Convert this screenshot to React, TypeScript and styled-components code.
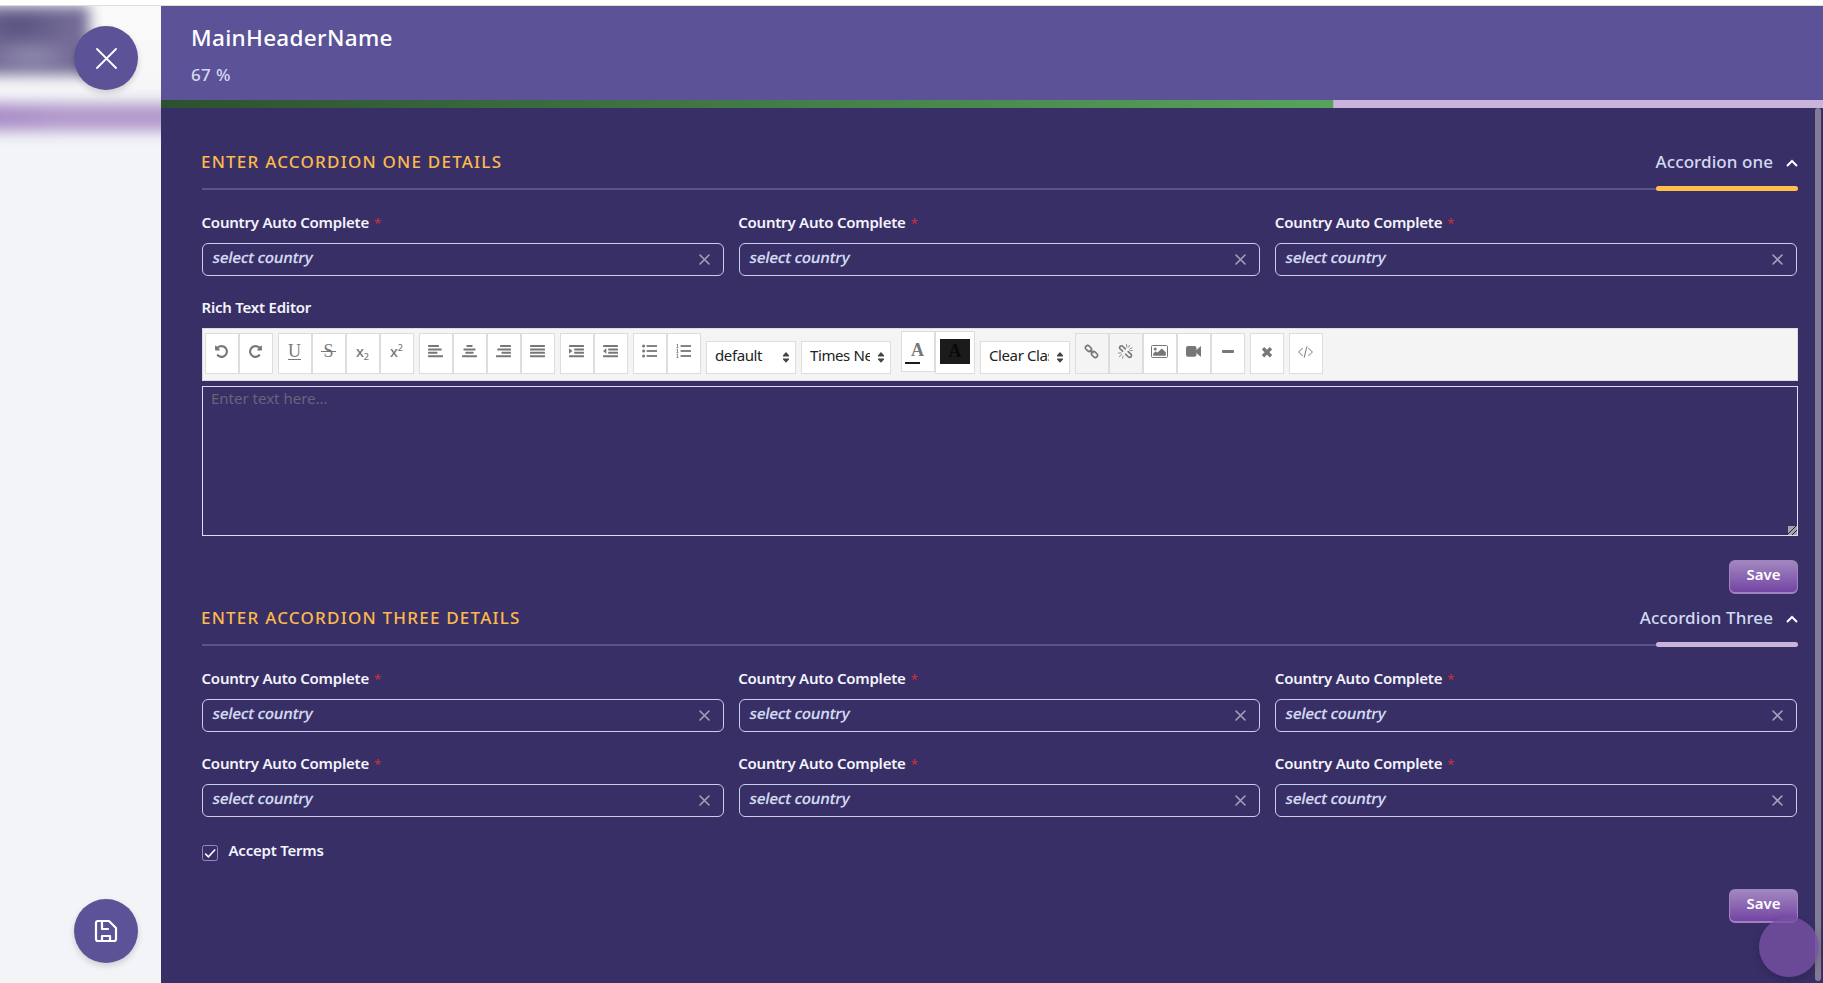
import React from 'react';
import styled, { createGlobalStyle } from 'styled-components';

const Global = createGlobalStyle`
  * { box-sizing: border-box; }
  html, body { margin: 0; padding: 0; overflow: hidden; }
  body { font-family: "Noto Sans", sans-serif; background: #fff; }
`;

const Page = styled.div`
  display: flex;
  width: 1823px;
  height: 983px;
  padding-top: 5px;
  background: #fff;
  overflow: hidden;
`;
const Backdrop = styled.div`
  position: relative;
  display: flex;
  flex-direction: column;
  justify-content: space-between;
  align-items: flex-end;
  width: 161px;
  padding: 20px 23px;
  border-top: 1px solid #dcdedc;
  background: linear-gradient(#fafafa 0, #f8f8f9 60px, #f2f4f8 110px);
  overflow: hidden;
`;
const BlurDark = styled.div`
  position: absolute;
  left: -20px;
  top: 0;
  width: 109px;
  height: 69px;
  background:
    radial-gradient(ellipse 45px 16px at 52px 50px, #9590b1, transparent),
    radial-gradient(ellipse 55px 22px at 38px 20px, #565080, transparent),
    #746b96;
  filter: blur(7px);
`;
const BlurBand = styled.div`
  position: absolute;
  left: -20px;
  top: 97px;
  width: 210px;
  height: 28px;
  background: linear-gradient(90deg, #a88cc6, #b29bcb 40%, #b29bcb);
  filter: blur(7px);
`;
const Round = styled.button`
  position: relative;
  display: flex;
  align-items: center;
  justify-content: center;
  width: 64px;
  height: 64px;
  padding: 0;
  border: 0;
  border-radius: 50%;
  background: #5b5298;
  color: #fff;
  box-shadow: 0 3px 6px rgba(0, 0, 0, 0.16);
`;
const Panel = styled.main`
  position: relative;
  flex: 1;
  display: flex;
  flex-direction: column;
  border-top: 1px solid #dcdedc;
  background: #382f67;
`;
const Header = styled.header`
  height: 94px;
  padding: 16px 30px 0;
  background: #5b5298;
`;
const Title = styled.h1`
  margin: 0;
  font-size: 22.5px;
  line-height: 32px;
  font-weight: 500;
  letter-spacing: 0.32px;
  color: #fff;
`;
const Percent = styled.div`
  margin-top: 9px;
  font-size: 17px;
  line-height: 24px;
  font-weight: 500;
  letter-spacing: 0.4px;
  color: #d3daf0;
`;
const Track = styled.div`
  height: 8px;
  background: #c9b5dc;
`;
const Fill = styled.div`
  height: 100%;
  border-right: 1px solid #b3aebf;
  background: linear-gradient(90deg, #2c5130, #58a35c);
`;
const Body = styled.div`
  flex: 1;
  padding: 41px 25px 0 41px;
`;
const Scrollbar = styled.div`
  position: absolute;
  right: 2px;
  top: 102px;
  width: 6px;
  height: 873px;
  border-radius: 3px;
  background: #837c94;
`;
const SectionHead = styled.div<{ $accent: string }>`
  position: relative;
  display: flex;
  justify-content: space-between;
  height: 41px;
  border-bottom: 2px solid #5e5389;
  &::after {
    content: '';
    position: absolute;
    right: 0;
    bottom: -3px;
    width: 142px;
    height: 5px;
    border-radius: 2.5px;
    background: ${(p) => p.$accent};
  }
`;
const SectionTitle = styled.h2`
  margin: 0 0 0 -1px;
  font-size: 17px;
  line-height: 25px;
  font-weight: 500;
  letter-spacing: 1.22px;
  color: #fdb94b;
`;
const Toggle = styled.div`
  display: flex;
  font-size: 17px;
  line-height: 25px;
  font-weight: 500;
  letter-spacing: 0.07px;
  color: #d3daf0;
  svg { margin: 9.5px 0 0 13px; }
`;
const Grid = styled.div`
  display: grid;
  grid-template-columns: repeat(3, 1fr);
  gap: 21px 15px;
  margin: 22px 1px 21px 0;
`;
const Label = styled.label`
  display: block;
  height: 31px;
  margin-left: -0.5px;
  font-size: 15px;
  line-height: 20px;
  font-weight: 600;
  letter-spacing: -0.22px;
  color: #f4f4fb;
`;
const Star = styled.span`
  margin-left: 5px;
  font-size: 13px;
  font-weight: 500;
  color: #c5303a;
`;
const Field = styled.div`
  display: flex;
  justify-content: space-between;
  height: 33px;
  padding: 3px 12px 0 10px;
  border: 1px solid #c6cfec;
  border-radius: 6px;
  svg { margin: 7px 1px 0 0; }
`;
const Placeholder = styled.span`
  height: 20px;
  font-size: 15px;
  line-height: 20px;
  font-weight: 600;
  letter-spacing: -0.25px;
  transform: skewX(-11deg);
  color: #d0d7ee;
`;
const Toolbar = styled.div`
  display: flex;
  align-items: flex-start;
  gap: 5px;
  height: 53px;
  margin-bottom: 5px;
  padding: 4px 2px;
  border: 1px solid #ddd;
  background: #f4f4f4;
`;
const Group = styled.div`
  display: flex;
`;
const Tool = styled.button<{ $off?: boolean; $wide?: boolean }>`
  display: flex;
  align-items: flex-start;
  justify-content: center;
  width: ${(p) => (p.$wide ? 40 : 34)}px;
  height: 41px;
  padding: 10px 1px 0 0;
  border: 1px solid #ddd;
  background: ${(p) => (p.$off ? '#f4f4f4' : '#fff')};
  color: #777;
  font-family: "Noto Sans", sans-serif;
`;
const Glyph = styled.span<{ $line?: string }>`
  font: 18px/15px "Liberation Serif", serif;
  text-decoration: ${(p) => p.$line || 'none'};
  text-decoration-thickness: 1px;
  text-underline-offset: 2px;
`;
const Ink = styled(Glyph)`
  margin-top: 1px;
  font-weight: 700;
`;
const Strike = styled.span`
  display: flex;
  justify-content: center;
  width: 15px;
  background: linear-gradient(currentColor, currentColor) 0 7px / 100% 1px no-repeat;
`;
const Script = styled.span`
  font: 500 14.5px/15px "Noto Sans", sans-serif;
  sub, sup { font-size: 9px; line-height: 0; }
  sup { vertical-align: 6px; }
  sub { vertical-align: -3px; }
`;
const Colors = styled.div`
  display: flex;
  margin: -2px 0 0 5px;
`;
const InkTool = styled(Tool)`
  position: relative;
  padding-top: 10px;
  &::after {
    content: '';
    position: absolute;
    left: 3px;
    top: 30px;
    width: 15px;
    height: 2px;
    background: #1b1b1b;
  }
`;
const FillTool = styled(Tool)`
  height: 43px;
  padding: 7px 0 0;
`;
const Swatch = styled.span`
  display: flex;
  justify-content: center;
  width: 30px;
  height: 25px;
  padding-top: 4px;
  background: #1b1b1b;
  color: #080808;
`;
const Select = styled.div`
  display: flex;
  justify-content: space-between;
  align-items: flex-start;
  width: 90px;
  height: 33px;
  margin-top: 8px;
  padding: 3px 6px 0 8px;
  border: 1px solid #ddd;
  background: #fff;
  font-size: 15px;
  line-height: 20px;
  letter-spacing: -0.4px;
  color: #222;
  svg { margin-top: 7px; }
`;
const SelectText = styled.span`
  width: 60px;
  overflow: hidden;
  white-space: nowrap;
`;
const Editor = styled.div`
  position: relative;
  height: 150px;
  padding: 0 8px;
  border: 1px solid #dde;
  font-size: 15px;
  line-height: 22px;
  color: #666677;
  svg { position: absolute; right: 0; bottom: 0; }
`;
const Actions = styled.div<{ $top: number }>`
  display: flex;
  justify-content: flex-end;
  margin: ${(p) => p.$top}px 0 11px;
`;
const Save = styled.button`
  width: 69px;
  height: 34px;
  padding: 0 0 6px;
  border: 1px solid #a283c2;
  border-bottom-width: 2px;
  border-radius: 6px;
  background: linear-gradient(#a287bf, #7445a4);
  color: #fff;
  font: 600 15px/20px "Noto Sans", sans-serif;
`;
const Terms = styled.div`
  display: flex;
  align-items: flex-start;
  height: 16px;
  margin-top: 28px;
  gap: 11px;
`;
const Box = styled.span`
  display: flex;
  width: 16px;
  height: 16px;
  border: 1px solid #a283c2;
  border-radius: 2.5px;
`;
const TermsText = styled(Label)`
  margin-top: -5px;
`;
const Floating = styled.div`
  position: absolute;
  right: 4px;
  bottom: 6px;
  width: 60px;
  height: 60px;
  border-radius: 50%;
  background: rgba(117, 81, 162, 0.82);
  box-shadow: 0 3px 10px rgba(0, 0, 0, 0.18);
`;

const UNDO =
  'M1664 896q0 156-61 298t-164 245-245 164-298 61q-172 0-327-72.5t-264-204.5q-7-10-6.5-22.5t8.5-20.5l137-138q10-9 25-9 16 2 23 12 73 95 179 147t225 52q104 0 198.5-40.5t163.5-109.5 109.5-163.5 40.5-198.5-40.5-198.5-109.5-163.5-163.5-109.5-198.5-40.5q-98 0-188 35.5t-160 101.5l137 138q31 30 14 69-17 40-59 40h-448q-26 0-45-19t-19-45v-448q0-42 40-59 39-17 69 14l130 129q107-101 244.5-156.5t284.5-55.5q156 0 298 61t245 164 164 245 61 298z';

const Undo = ({ flip }: { flip?: boolean }) => (
  <svg width="15" height="15" viewBox="0 0 1792 1792" fill="currentColor">
    <path d={UNDO} transform={flip ? 'translate(1792 0) scale(-1 1)' : undefined} />
  </svg>
);

/* Each row is [x, width]. */
const Rows = ({ rows, children }: { rows: number[][]; children?: React.ReactNode }) => (
  <svg width="15" height="15" viewBox="0 0 15 15" fill="currentColor">
    {rows.map(([x, w], i) => (
      <rect key={i} x={x} y={1 + i * 3.4} width={w} height="2" rx="0.4" />
    ))}
    {children}
  </svg>
);
const indentRows = [[0, 15], [5.2, 9.8], [5.2, 9.8], [0, 15]];

const Bullets = ({ numbered }: { numbered?: boolean }) => (
  <svg width="15" height="15" viewBox="0 0 15 15" fill="currentColor">
    {[2, 7, 12].map((y) => (
      <g key={y}>
        {numbered ? (
          <path d={`M0.6 ${y - 1.6}L1.5 ${y - 2}V${y + 1.4}M0.4 ${y + 1.6}H2.4`} fill="none" stroke="currentColor" strokeWidth="0.8" />
        ) : (
          <circle cx="1.6" cy={y} r="1.5" />
        )}
        <rect x="4.6" y={y - 0.9} width="10.4" height="1.8" />
      </g>
    ))}
  </svg>
);

const Link = ({ broken }: { broken?: boolean }) => (
  <svg width="15" height="15" viewBox="0 0 15 15" fill="none" stroke="currentColor" strokeWidth="1.6" strokeLinecap="round">
    {broken ? (
      <>
        <path d="M4.6 7.2L2.3 5C1.4 4.1 1.4 3.2 2.2 2.4C3 1.6 4 1.6 4.9 2.5L7.2 4.9M10.2 7.6L12.9 10.2C13.8 11.1 13.7 12.1 12.9 12.9C12.1 13.7 11.1 13.7 10.2 12.8L7.7 10.2" />
        <path strokeWidth="0.8" d="M8.6 0.5V3M11.7 1.3L10.1 3.4M13.9 3.8L11.7 4.9M14.3 6.5H11.9M0.5 9H3M1.3 12.6L3.6 10.7M4.6 14.3L5.2 12" />
      </>
    ) : (
      <>
        <rect x="1.1" y="2.3" width="6.8" height="4.4" rx="2.2" transform="rotate(45 4.5 4.5)" />
        <rect x="7.1" y="8.3" width="6.8" height="4.4" rx="2.2" transform="rotate(45 10.5 10.5)" />
        <path d="M6.2 6.2L8.8 8.8" />
      </>
    )}
  </svg>
);
const Image = () => (
  <svg width="17" height="15" viewBox="0 0 17 15" fill="currentColor">
    <rect x="0.5" y="1.5" width="16" height="12" rx="1" fill="none" stroke="currentColor" />
    <circle cx="4.2" cy="4.9" r="1.5" />
    <path d="M2.2 11.7V9.6L4.8 7.2L6.5 8.6L10.8 4.5L14.8 8.2V11.7Z" />
  </svg>
);
const Video = () => (
  <svg width="15" height="15" viewBox="0 0 15 15" fill="currentColor">
    <rect x="0" y="2" width="10.5" height="10.8" rx="2" />
    <path d="M10 6.4L14.2 2.4Q15 2 15 3V12Q15 12.9 14.2 12.4L10 8.4Z" />
  </svg>
);
const Code = () => (
  <svg width="17" height="15" viewBox="0 0 17 15" fill="none" stroke="currentColor" strokeWidth="1">
    <path d="M5.6 4L1.6 8L5.6 12M11.4 4L15.4 8L11.4 12M9.9 2.5L7.2 13.5" />
  </svg>
);
const Arrows = () => (
  <svg width="6" height="11" viewBox="0 0 6 11" fill="#444">
    <path d="M3 0L6 3.2V4.5H0V3.2ZM0 6.5H6V7.6L3 10.8L0 7.6Z" />
  </svg>
);
const Cross = ({ size, width, color }: { size: number; width: number; color: string }) => (
  <svg width={size} height={size} viewBox={`0 0 ${size} ${size}`} stroke={color} strokeWidth={width} strokeLinecap="round">
    <path d={`M1 1L${size - 1} ${size - 1}M${size - 1} 1L1 ${size - 1}`} />
  </svg>
);

const Head = ({ title, toggle, accent }: { title: string; toggle: string; accent: string }) => (
  <SectionHead $accent={accent}>
    <SectionTitle>{title}</SectionTitle>
    <Toggle>
      {toggle}
      <svg width="12" height="8" viewBox="0 0 12 8" fill="none" stroke="#fff" strokeWidth="2">
        <path d="M1 7L6 2L11 7" />
      </svg>
    </Toggle>
  </SectionHead>
);
const Countries = ({ count }: { count: number }) => (
  <Grid>
    {Array.from({ length: count }, (_, i) => (
      <div key={i}>
        <Label>Country Auto Complete<Star>*</Star></Label>
        <Field>
          <Placeholder>select country</Placeholder>
          <Cross size={11} width={1.6} color="#a3a1b8" />
        </Field>
      </div>
    ))}
  </Grid>
);
const Picker = ({ text }: { text: string }) => (
  <Select><SelectText>{text}</SelectText><Arrows /></Select>
);

export default function App() {
  return (
    <>
      <Global />
      <Page>
        <Backdrop>
          <BlurDark />
          <BlurBand />
          <Round><Cross size={21} width={1.8} color="#fff" /></Round>
          <Round>
            <svg width="24" height="24" viewBox="0 0 24 24" fill="none" stroke="#fff" strokeWidth="2.2" strokeLinejoin="round" strokeLinecap="round">
              <path d="M4 2H15L22 9V20Q22 22 20 22H4Q2 22 2 20V4Q2 2 4 2ZM8 2V10H14M8 22V17H16V22" />
            </svg>
          </Round>
        </Backdrop>
        <Panel>
          <Header>
            <Title>MainHeaderName</Title>
            <Percent>67 %</Percent>
          </Header>
          <Track><Fill style={{ width: '70.6%' }} /></Track>
          <Body>
            <Head title="ENTER ACCORDION ONE DETAILS" toggle="Accordion one" accent="#ffbf4a" />
            <Countries count={3} />
            <Label>Rich Text Editor</Label>
            <Toolbar>
              <Group>
                <Tool><Undo /></Tool>
                <Tool><Undo flip /></Tool>
              </Group>
              <Group>
                <Tool><Glyph $line="underline">U</Glyph></Tool>
                <Tool><Strike><Glyph>S</Glyph></Strike></Tool>
                <Tool><Script>x<sub>2</sub></Script></Tool>
                <Tool><Script>x<sup>2</sup></Script></Tool>
              </Group>
              <Group>
                <Tool><Rows rows={[[0, 11], [0, 13.7], [0, 9.3], [0, 15]]} /></Tool>
                <Tool><Rows rows={[[4.5, 6], [1.5, 12], [3.5, 8], [0, 15]]} /></Tool>
                <Tool><Rows rows={[[4, 11], [1.3, 13.7], [5.7, 9.3], [0, 15]]} /></Tool>
                <Tool><Rows rows={[[0, 15], [0, 15], [0, 15], [0, 15]]} /></Tool>
              </Group>
              <Group>
                <Tool><Rows rows={indentRows}><path d="M0 4.2L3.4 7L0 9.8Z" /></Rows></Tool>
                <Tool><Rows rows={indentRows}><path d="M3.4 4.2L0 7L3.4 9.8Z" /></Rows></Tool>
              </Group>
              <Group>
                <Tool><Bullets /></Tool>
                <Tool><Bullets numbered /></Tool>
              </Group>
              <Picker text="default" />
              <Picker text="Times New" />
              <Colors>
                <InkTool><Ink>A</Ink></InkTool>
                <FillTool $wide><Swatch><Ink>A</Ink></Swatch></FillTool>
              </Colors>
              <Picker text="Clear Class" />
              <Group>
                <Tool $off><Link /></Tool>
                <Tool $off><Link broken /></Tool>
                <Tool><Image /></Tool>
                <Tool><Video /></Tool>
                <Tool>
                  <svg width="12" height="15"><rect y="6" width="12" height="3" rx="1" fill="currentColor" /></svg>
                </Tool>
              </Group>
              <Tool>
                <svg width="12" height="15" viewBox="0 0 12 15" stroke="currentColor" strokeWidth="3.4"><path d="M2 4.2L10 12.2M10 4.2L2 12.2" /></svg>
              </Tool>
              <Tool><Code /></Tool>
            </Toolbar>
            <Editor>
              Enter text here...
              <svg width="9" height="9" viewBox="0 0 9 9">
                <rect width="9" height="9" fill="#a5a2b5" />
                <path d="M0 8L8 0M4 9L9 4" stroke="#222" />
              </svg>
            </Editor>
            <Actions $top={24}><Save>Save</Save></Actions>
            <Head title="ENTER ACCORDION THREE DETAILS" toggle="Accordion Three" accent="#c9b5dc" />
            <Countries count={6} />
            <Terms>
              <Box>
                <svg width="14" height="14" viewBox="0 0 14 14" fill="none" stroke="#fff" strokeWidth="1.5"><path d="M2.2 7.6L5.4 10.8L12.2 3.6" /></svg>
              </Box>
              <TermsText>Accept Terms</TermsText>
            </Terms>
            <Actions $top={28}><Save>Save</Save></Actions>
          </Body>
          <Scrollbar />
          <Floating />
        </Panel>
      </Page>
    </>
  );
}
